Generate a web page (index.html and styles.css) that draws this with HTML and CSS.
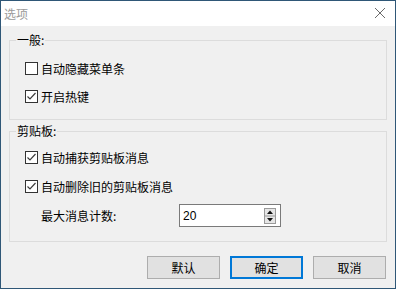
FILE: index.html
```html
<!DOCTYPE html>
<html lang="zh-CN">
  <head>
    <meta charset="UTF-8" />
    <title>选项</title>
    <link rel="stylesheet" href="styles.css">
  </head>
  <body>
    <div class="window">
      <div class="titlebar">
        <span class="title">选项</span>
        <svg class="close" width="12" height="12" viewBox="0 0 12 12">
          <path d="M1 1 L11 11 M11 1 L1 11" stroke="#6a6a6a" stroke-width="1" fill="none" />
        </svg>
      </div>

      <div class="content">
        <fieldset class="group">
          <legend>一般:</legend>
          <label class="row">
            <span class="checkbox"></span>
            <span>自动隐藏菜单条</span>
          </label>
          <label class="row">
            <span class="checkbox checked">
              <svg width="11" height="11" viewBox="0 0 11 11"><path d="M1.5 5.5 L4 8 L9.5 2" stroke="#3c3c3c" stroke-width="1.2" fill="none" /></svg>
            </span>
            <span>开启热键</span>
          </label>
        </fieldset>

        <fieldset class="group second">
          <legend>剪贴板:</legend>
          <label class="row tall">
            <span class="checkbox checked">
              <svg width="11" height="11" viewBox="0 0 11 11"><path d="M1.5 5.5 L4 8 L9.5 2" stroke="#3c3c3c" stroke-width="1.2" fill="none" /></svg>
            </span>
            <span>自动捕获剪贴板消息</span>
          </label>
          <label class="row tall">
            <span class="checkbox checked">
              <svg width="11" height="11" viewBox="0 0 11 11"><path d="M1.5 5.5 L4 8 L9.5 2" stroke="#3c3c3c" stroke-width="1.2" fill="none" /></svg>
            </span>
            <span>自动删除旧的剪贴板消息</span>
          </label>
          <div class="count-row">
            <span class="count-label">最大消息计数:</span>
            <div class="spin-input">
              <span class="value">20</span>
              <svg class="spinner" width="12" height="16" viewBox="0 0 12 16">
                <rect x="0.5" y="0.5" width="11" height="15" fill="#e6e6e6" stroke="#9a9a9a" />
                <line x1="1" y1="8" x2="11" y2="8" stroke="#9a9a9a" />
                <path d="M3 6 L6 2.5 L9 6 Z" fill="#111" />
                <path d="M3 10 L6 13.5 L9 10 Z" fill="#111" />
              </svg>
            </div>
          </div>
        </fieldset>

        <div class="buttons">
          <button type="button">默认</button>
          <button type="button" class="default">确定</button>
          <button type="button">取消</button>
        </div>
      </div>
    </div>
  </body>
</html>
```

FILE: styles.css
```css
html,
body {
  margin: 0;
  padding: 0;
}
body {
  font-family: "Noto Sans CJK SC", "Liberation Sans", sans-serif;
  font-size: 12px;
  color: #000;
  background: #f0f0f0;
}
.window {
  width: 396px;
  height: 289px;
  box-sizing: border-box;
  border: 1px solid #2f5777;
  background: #f0f0f0;
  display: flex;
  flex-direction: column;
}
.titlebar {
  height: 25px;
  background: #fff;
  display: flex;
  align-items: center;
  justify-content: space-between;
  padding: 0 9px 0 3px;
}
.title {
  color: #9a9a9a;
  font-size: 12px;
}
.close {
  margin-top: -1px;
}
.content {
  flex: 1;
  padding: 0 8px 0 8px;
}
.group {
  margin: 6px 0 0 0;
  padding: 6px 0 9px 6px;
  border: 1px solid #dcdcdc;
}
.group.second {
  margin-top: 3px;
  padding-top: 4px;
  padding-bottom: 11px;
}
legend {
  padding: 0 1px;
  line-height: 16px;
}
.row {
  display: flex;
  align-items: center;
  height: 28px;
  padding-left: 9px;
}
.row.tall {
  height: 29px;
}
.checkbox {
  width: 11px;
  height: 11px;
  border: 1px solid #333;
  background: #fff;
  margin-right: 3px;
  display: flex;
  align-items: center;
  justify-content: center;
}
.count-row {
  display: flex;
  align-items: center;
  height: 29px;
  padding-left: 25px;
}
.count-label {
  width: 138px;
}
.spin-input {
  width: 98px;
  height: 21px;
  border: 1px solid #7a7a7a;
  background: #fff;
  display: flex;
  align-items: center;
  justify-content: space-between;
  padding: 0 4px 0 3px;
  box-sizing: content-box;
  margin-left: 0;
}
.spin-input {
  width: 93px;
}
.value {
  font-family: "Liberation Sans", sans-serif;
  font-size: 12px;
}
.buttons {
  display: flex;
  justify-content: flex-end;
  gap: 10px;
  margin-top: 14px;
  padding-right: 1px;
}
button {
  width: 73px;
  height: 23px;
  font-family: inherit;
  font-size: 12px;
  background: #e1e1e1;
  border: 1px solid #adadad;
  border-radius: 0;
  padding: 0;
  color: #000;
}
button.default {
  border-color: #0078d7;
  box-shadow: inset 0 0 0 1px #0078d7;
}
```
